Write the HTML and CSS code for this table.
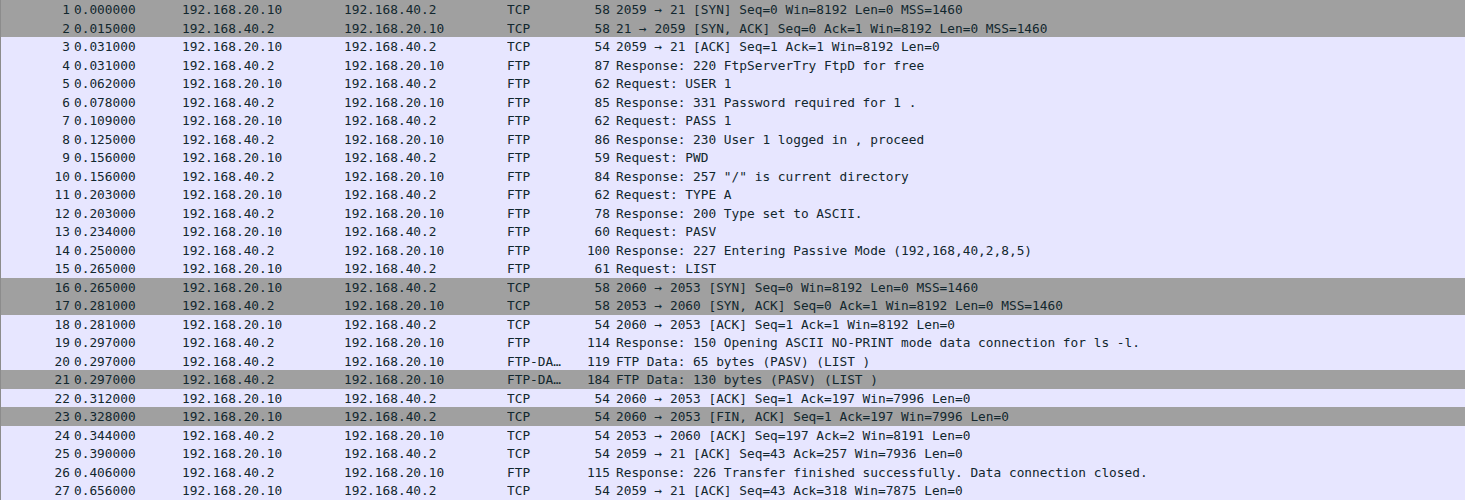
FILE: index.html
```html
<!DOCTYPE html>
<html>
<head>
<meta charset="utf-8">
<link rel="stylesheet" href="styles.css">
</head>
<body>
<div class="list">
<div class="row syn"><span class="no">1</span><span class="time">0.000000</span><span class="src">192.168.20.10</span><span class="dst">192.168.40.2</span><span class="proto">TCP</span><span class="len">58</span><span class="info">2059 → 21 [SYN] Seq=0 Win=8192 Len=0 MSS=1460</span></div>
<div class="row syn"><span class="no">2</span><span class="time">0.015000</span><span class="src">192.168.40.2</span><span class="dst">192.168.20.10</span><span class="proto">TCP</span><span class="len">58</span><span class="info">21 → 2059 [SYN, ACK] Seq=0 Ack=1 Win=8192 Len=0 MSS=1460</span></div>
<div class="row"><span class="no">3</span><span class="time">0.031000</span><span class="src">192.168.20.10</span><span class="dst">192.168.40.2</span><span class="proto">TCP</span><span class="len">54</span><span class="info">2059 → 21 [ACK] Seq=1 Ack=1 Win=8192 Len=0</span></div>
<div class="row"><span class="no">4</span><span class="time">0.031000</span><span class="src">192.168.40.2</span><span class="dst">192.168.20.10</span><span class="proto">FTP</span><span class="len">87</span><span class="info">Response: 220 FtpServerTry FtpD for free</span></div>
<div class="row"><span class="no">5</span><span class="time">0.062000</span><span class="src">192.168.20.10</span><span class="dst">192.168.40.2</span><span class="proto">FTP</span><span class="len">62</span><span class="info">Request: USER 1</span></div>
<div class="row"><span class="no">6</span><span class="time">0.078000</span><span class="src">192.168.40.2</span><span class="dst">192.168.20.10</span><span class="proto">FTP</span><span class="len">85</span><span class="info">Response: 331 Password required for 1 .</span></div>
<div class="row"><span class="no">7</span><span class="time">0.109000</span><span class="src">192.168.20.10</span><span class="dst">192.168.40.2</span><span class="proto">FTP</span><span class="len">62</span><span class="info">Request: PASS 1</span></div>
<div class="row"><span class="no">8</span><span class="time">0.125000</span><span class="src">192.168.40.2</span><span class="dst">192.168.20.10</span><span class="proto">FTP</span><span class="len">86</span><span class="info">Response: 230 User 1 logged in , proceed</span></div>
<div class="row"><span class="no">9</span><span class="time">0.156000</span><span class="src">192.168.20.10</span><span class="dst">192.168.40.2</span><span class="proto">FTP</span><span class="len">59</span><span class="info">Request: PWD</span></div>
<div class="row"><span class="no">10</span><span class="time">0.156000</span><span class="src">192.168.40.2</span><span class="dst">192.168.20.10</span><span class="proto">FTP</span><span class="len">84</span><span class="info">Response: 257 "/" is current directory</span></div>
<div class="row"><span class="no">11</span><span class="time">0.203000</span><span class="src">192.168.20.10</span><span class="dst">192.168.40.2</span><span class="proto">FTP</span><span class="len">62</span><span class="info">Request: TYPE A</span></div>
<div class="row"><span class="no">12</span><span class="time">0.203000</span><span class="src">192.168.40.2</span><span class="dst">192.168.20.10</span><span class="proto">FTP</span><span class="len">78</span><span class="info">Response: 200 Type set to ASCII.</span></div>
<div class="row"><span class="no">13</span><span class="time">0.234000</span><span class="src">192.168.20.10</span><span class="dst">192.168.40.2</span><span class="proto">FTP</span><span class="len">60</span><span class="info">Request: PASV</span></div>
<div class="row"><span class="no">14</span><span class="time">0.250000</span><span class="src">192.168.40.2</span><span class="dst">192.168.20.10</span><span class="proto">FTP</span><span class="len">100</span><span class="info">Response: 227 Entering Passive Mode (192,168,40,2,8,5)</span></div>
<div class="row"><span class="no">15</span><span class="time">0.265000</span><span class="src">192.168.20.10</span><span class="dst">192.168.40.2</span><span class="proto">FTP</span><span class="len">61</span><span class="info">Request: LIST</span></div>
<div class="row syn"><span class="no">16</span><span class="time">0.265000</span><span class="src">192.168.20.10</span><span class="dst">192.168.40.2</span><span class="proto">TCP</span><span class="len">58</span><span class="info">2060 → 2053 [SYN] Seq=0 Win=8192 Len=0 MSS=1460</span></div>
<div class="row syn"><span class="no">17</span><span class="time">0.281000</span><span class="src">192.168.40.2</span><span class="dst">192.168.20.10</span><span class="proto">TCP</span><span class="len">58</span><span class="info">2053 → 2060 [SYN, ACK] Seq=0 Ack=1 Win=8192 Len=0 MSS=1460</span></div>
<div class="row"><span class="no">18</span><span class="time">0.281000</span><span class="src">192.168.20.10</span><span class="dst">192.168.40.2</span><span class="proto">TCP</span><span class="len">54</span><span class="info">2060 → 2053 [ACK] Seq=1 Ack=1 Win=8192 Len=0</span></div>
<div class="row"><span class="no">19</span><span class="time">0.297000</span><span class="src">192.168.40.2</span><span class="dst">192.168.20.10</span><span class="proto">FTP</span><span class="len">114</span><span class="info">Response: 150 Opening ASCII NO-PRINT mode data connection for ls -l.</span></div>
<div class="row"><span class="no">20</span><span class="time">0.297000</span><span class="src">192.168.40.2</span><span class="dst">192.168.20.10</span><span class="proto">FTP-DATA</span><span class="len">119</span><span class="info">FTP Data: 65 bytes (PASV) (LIST )</span></div>
<div class="row syn"><span class="no">21</span><span class="time">0.297000</span><span class="src">192.168.40.2</span><span class="dst">192.168.20.10</span><span class="proto">FTP-DATA</span><span class="len">184</span><span class="info">FTP Data: 130 bytes (PASV) (LIST )</span></div>
<div class="row"><span class="no">22</span><span class="time">0.312000</span><span class="src">192.168.20.10</span><span class="dst">192.168.40.2</span><span class="proto">TCP</span><span class="len">54</span><span class="info">2060 → 2053 [ACK] Seq=1 Ack=197 Win=7996 Len=0</span></div>
<div class="row syn"><span class="no">23</span><span class="time">0.328000</span><span class="src">192.168.20.10</span><span class="dst">192.168.40.2</span><span class="proto">TCP</span><span class="len">54</span><span class="info">2060 → 2053 [FIN, ACK] Seq=1 Ack=197 Win=7996 Len=0</span></div>
<div class="row"><span class="no">24</span><span class="time">0.344000</span><span class="src">192.168.40.2</span><span class="dst">192.168.20.10</span><span class="proto">TCP</span><span class="len">54</span><span class="info">2053 → 2060 [ACK] Seq=197 Ack=2 Win=8191 Len=0</span></div>
<div class="row"><span class="no">25</span><span class="time">0.390000</span><span class="src">192.168.20.10</span><span class="dst">192.168.40.2</span><span class="proto">TCP</span><span class="len">54</span><span class="info">2059 → 21 [ACK] Seq=43 Ack=257 Win=7936 Len=0</span></div>
<div class="row"><span class="no">26</span><span class="time">0.406000</span><span class="src">192.168.40.2</span><span class="dst">192.168.20.10</span><span class="proto">FTP</span><span class="len">115</span><span class="info">Response: 226 Transfer finished successfully. Data connection closed.</span></div>
<div class="row"><span class="no">27</span><span class="time">0.656000</span><span class="src">192.168.20.10</span><span class="dst">192.168.40.2</span><span class="proto">TCP</span><span class="len">54</span><span class="info">2059 → 21 [ACK] Seq=43 Ack=318 Win=7875 Len=0</span></div>
</div>
</body>
</html>
```
FILE: styles.css
```css
html, body {
  margin: 0;
  padding: 0;
  background: #ffffff;
}
.list {
  width: 1465px;
  box-sizing: border-box;
  border-left: 1px solid #8c8c8c;
  font-family: "DejaVu Sans Mono", "Liberation Mono", monospace;
  font-size: 12.8px;
  color: #12272e;
}
.row {
  display: flex;
  box-sizing: border-box;
  height: 18.5px;
  padding-top: 1px;
  line-height: 17.5px;
  background: #e7e6ff;
  white-space: pre;
}
.row.syn {
  background: #a0a0a0;
}
.row span {
  display: block;
  overflow: hidden;
  flex: none;
}
.no { width: 69px; text-align: right; }
.time { width: 108px; padding-left: 4px; }
.src { width: 162px; }
.dst { width: 163px; }
.proto { width: 58px; text-overflow: ellipsis; }
.len { width: 45px; text-align: right; }
.info { flex: 1 1 auto; padding-left: 6px; }
```
